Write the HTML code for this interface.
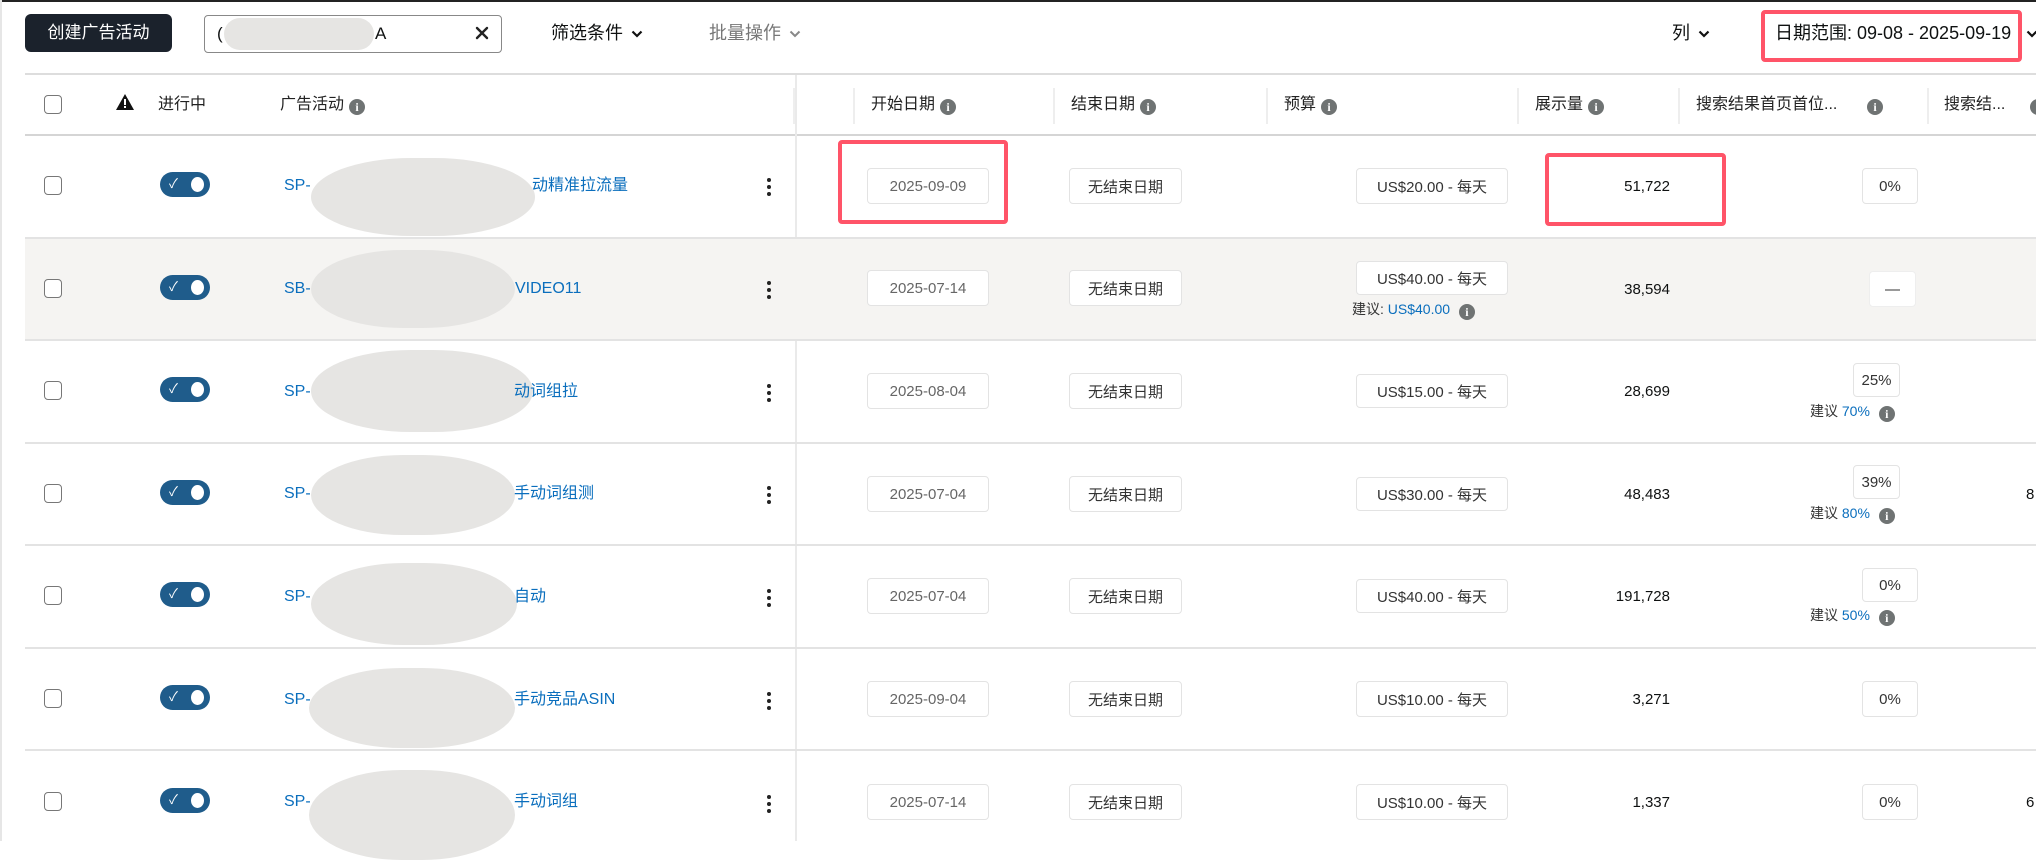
<!DOCTYPE html>
<html><head><meta charset="utf-8"><style>
*{box-sizing:border-box;margin:0;padding:0}
body{width:2036px;height:841px;overflow:hidden;background:#fff;font-family:"Liberation Sans","Noto Sans CJK SC",sans-serif;color:#0f1111;position:relative;font-size:16px}
.a{position:absolute;white-space:nowrap;line-height:22px}
.line{position:absolute;background:#d5d9d9}
.box{position:absolute;background:#fff;border:1px solid #e3e3e3;border-radius:4px;text-align:center;font-size:15px;color:#333;display:flex;align-items:center;justify-content:center}
.info{display:inline-block;width:16px;height:16px;border-radius:50%;background:#6f7373;color:#fff;font-size:12px;font-weight:bold;text-align:center;line-height:16px;font-family:"Liberation Serif",serif;vertical-align:-2px;margin-left:5px}
.cb{position:absolute;left:44px;width:18px;height:19px;border:1.5px solid #777;border-radius:4px;background:#fff}
.tog{position:absolute;left:160px;width:50px;height:25px;border-radius:13px;background:#1f5c8b}
.tog:before{content:"✓";position:absolute;left:9px;top:2px;color:#fff;font-size:13px;line-height:20px}
.tog:after{content:"";position:absolute;right:6px;top:5px;width:13px;height:15px;border-radius:50%;background:#fff}
.blob{position:absolute;background:#e6e5e3;border-radius:45%/50%}
.lnk{color:#0a6ebd;font-size:16px}
.keb{position:absolute;left:767px;width:4px}
.keb i{display:block;width:4px;height:4px;border-radius:50%;background:#222;margin-bottom:3px}
.sug{font-size:14px;color:#333}
.sug b{font-weight:normal;color:#0a6ebd}
.hd{position:absolute;top:94px;font-size:16px;color:#222;line-height:22px;white-space:nowrap}
.vd{position:absolute;top:88px;width:2px;height:36px;background:#eee}
.num{position:absolute;right:366px;font-size:15px;line-height:22px}
.chev{display:inline-block;vertical-align:middle;margin-left:8px}
</style></head><body>
<div class="a" style="left:0;top:0;width:2036px;height:2px;background:#232323"></div>
<div class="a" style="left:0;top:0;width:2px;height:841px;background:#e6e6e6"></div>
<div class="a" style="left:25px;top:14px;width:147px;height:38px;background:#1b222c;border-radius:6px;color:#fff;font-size:17px;text-align:center;line-height:38px">创建广告活动</div>
<div class="a" style="left:204px;top:15px;width:298px;height:38px;border:1px solid #888;border-radius:4px"></div>
<div class="a" style="left:217px;top:23px;font-size:17px">(</div>
<div class="blob" style="left:224px;top:18px;width:150px;height:32px;border-radius:16px"></div>
<div class="a" style="left:375px;top:23px;font-size:17px">A</div>
<svg class="a" style="left:475px;top:26px" width="14" height="14" viewBox="0 0 14 14"><path d="M2 2L12 12M12 2L2 12" stroke="#222" stroke-width="2.4" stroke-linecap="round"/></svg>
<div class="a" style="left:551px;top:22px;font-size:18px">筛选条件<svg class="chev" width="12" height="8" viewBox="0 0 12 8"><path d="M1.5 1.5L6 6L10.5 1.5" fill="none" stroke="#111" stroke-width="2.2"/></svg></div>
<div class="a" style="left:709px;top:22px;font-size:18px;color:#777">批量操作<svg class="chev" width="12" height="8" viewBox="0 0 12 8"><path d="M1.5 1.5L6 6L10.5 1.5" fill="none" stroke="#888" stroke-width="2"/></svg></div>
<div class="a" style="left:1672px;top:22px;font-size:18px">列<svg class="chev" width="12" height="8" viewBox="0 0 12 8"><path d="M1.5 1.5L6 6L10.5 1.5" fill="none" stroke="#111" stroke-width="2.2"/></svg></div>
<div class="a" style="left:1775px;top:22px;font-size:18px">日期范围: 09-08 - 2025-09-19</div>
<svg class="a" style="left:2026px;top:30px" width="12" height="8" viewBox="0 0 12 8"><path d="M1.5 1.5L6 6L10.5 1.5" fill="none" stroke="#111" stroke-width="2.2"/></svg>
<div class="a" style="left:1761px;top:10px;width:261px;height:52px;border:4px solid #ff5468;border-radius:4px"></div>

<div class="line" style="left:25px;top:73px;width:2011px;height:2px;background:#ddd"></div>
<div class="line" style="left:25px;top:134px;width:2011px;height:2px;background:#d5d5d5"></div>
<div class="a" style="left:795px;top:75px;width:2px;height:766px;background:#eaeaea"></div>
<div class="vd" style="left:793px"></div><div class="vd" style="left:853px"></div><div class="vd" style="left:1053px"></div><div class="vd" style="left:1266px"></div><div class="vd" style="left:1517px"></div><div class="vd" style="left:1678px"></div><div class="vd" style="left:1927px"></div>
<div class="cb" style="top:95px"></div>
<svg class="a" style="left:115px;top:93px" width="20" height="18" viewBox="0 0 20 18"><path d="M10 1L19 17H1Z" fill="#111"/><rect x="9" y="6" width="2" height="6" fill="#fff"/><rect x="9" y="13" width="2" height="2" fill="#fff"/></svg>
<div class="hd" style="left:158px">进行中</div>
<div class="hd" style="left:280px">广告活动<span class="info">i</span></div>
<div class="hd" style="left:871px">开始日期<span class="info">i</span></div>
<div class="hd" style="left:1071px">结束日期<span class="info">i</span></div>
<div class="hd" style="left:1284px">预算<span class="info">i</span></div>
<div class="hd" style="left:1535px">展示量<span class="info">i</span></div>
<div class="hd" style="left:1696px">搜索结果首页首位...</div><div class="hd" style="left:1862px"><span class="info">i</span></div>
<div class="hd" style="left:1944px">搜索结...</div><div class="hd" style="left:2025px"><span class="info">i</span></div>

<div class="a" style="left:25px;top:238px;width:2011px;height:102px;background:#f5f4f2"></div>
<div class="line" style="left:25px;top:237px;width:2011px;height:2px;background:#e3e3e3"></div>
<div class="line" style="left:25px;top:339px;width:2011px;height:2px;background:#e3e3e3"></div>
<div class="line" style="left:25px;top:442px;width:2011px;height:2px;background:#e3e3e3"></div>
<div class="line" style="left:25px;top:544px;width:2011px;height:2px;background:#e3e3e3"></div>
<div class="line" style="left:25px;top:647px;width:2011px;height:2px;background:#e3e3e3"></div>
<div class="line" style="left:25px;top:749px;width:2011px;height:2px;background:#e3e3e3"></div>

<!-- row1 -->
<div class="cb" style="top:176px"></div><div class="tog" style="top:172px"></div>
<div class="a lnk" style="left:284px;top:175px">SP-</div><div class="blob" style="left:311px;top:158px;width:224px;height:78px"></div><div class="a lnk" style="left:532px;top:175px">动精准拉流量</div>
<div class="keb" style="top:178px"><i></i><i></i><i></i></div>
<div class="box" style="left:867px;top:168px;width:122px;height:36px;color:#666">2025-09-09</div>
<div class="box" style="left:1069px;top:168px;width:113px;height:36px">无结束日期</div>
<div class="box" style="left:1356px;top:168px;width:152px;height:36px">US$20.00 - 每天</div>
<div class="num" style="top:176px">51,722</div>
<div class="box" style="left:1862px;top:168px;width:56px;height:36px">0%</div>
<div class="a" style="left:838px;top:140px;width:170px;height:84px;border:4px solid #ff5468;border-radius:4px"></div>
<div class="a" style="left:1545px;top:153px;width:181px;height:73px;border:4px solid #ff5468;border-radius:4px"></div>

<!-- row2 -->
<div class="cb" style="top:279px"></div><div class="tog" style="top:275px"></div>
<div class="a lnk" style="left:284px;top:278px">SB-</div><div class="blob" style="left:311px;top:250px;width:204px;height:78px"></div><div class="a lnk" style="left:515px;top:278px">VIDEO11</div>
<div class="keb" style="top:281px"><i></i><i></i><i></i></div>
<div class="box" style="left:867px;top:270px;width:122px;height:36px;color:#666">2025-07-14</div>
<div class="box" style="left:1069px;top:270px;width:113px;height:36px">无结束日期</div>
<div class="box" style="left:1356px;top:261px;width:152px;height:34px">US$40.00 - 每天</div>
<div class="a sug" style="left:1352px;top:298px">建议: <b>US$40.00</b> <span class="info">i</span></div>
<div class="num" style="top:279px">38,594</div>
<div class="box" style="left:1869px;top:271px;width:47px;height:36px;border-color:#eee">—</div>

<!-- row3 -->
<div class="cb" style="top:381px"></div><div class="tog" style="top:377px"></div>
<div class="a lnk" style="left:284px;top:381px">SP-</div><div class="blob" style="left:311px;top:350px;width:222px;height:82px"></div><div class="a lnk" style="left:514px;top:381px">动词组拉</div>
<div class="keb" style="top:384px"><i></i><i></i><i></i></div>
<div class="box" style="left:867px;top:373px;width:122px;height:36px;color:#666">2025-08-04</div>
<div class="box" style="left:1069px;top:373px;width:113px;height:36px">无结束日期</div>
<div class="box" style="left:1356px;top:374px;width:152px;height:34px">US$15.00 - 每天</div>
<div class="num" style="top:381px">28,699</div>
<div class="box" style="left:1853px;top:363px;width:47px;height:34px">25%</div>
<div class="a sug" style="left:1810px;top:400px">建议 <b>70%</b> <span class="info">i</span></div>

<!-- row4 -->
<div class="cb" style="top:484px"></div><div class="tog" style="top:480px"></div>
<div class="a lnk" style="left:284px;top:483px">SP-</div><div class="blob" style="left:311px;top:455px;width:204px;height:80px"></div><div class="a lnk" style="left:514px;top:483px">手动词组测</div>
<div class="keb" style="top:486px"><i></i><i></i><i></i></div>
<div class="box" style="left:867px;top:476px;width:122px;height:36px;color:#666">2025-07-04</div>
<div class="box" style="left:1069px;top:476px;width:113px;height:36px">无结束日期</div>
<div class="box" style="left:1356px;top:477px;width:152px;height:34px">US$30.00 - 每天</div>
<div class="num" style="top:484px">48,483</div>
<div class="box" style="left:1853px;top:465px;width:47px;height:34px">39%</div>
<div class="a sug" style="left:1810px;top:502px">建议 <b>80%</b> <span class="info">i</span></div>
<div class="a" style="left:2026px;top:484px;font-size:15px">8</div>

<!-- row5 -->
<div class="cb" style="top:586px"></div><div class="tog" style="top:582px"></div>
<div class="a lnk" style="left:284px;top:586px">SP-</div><div class="blob" style="left:311px;top:563px;width:206px;height:82px"></div><div class="a lnk" style="left:514px;top:586px">自动</div>
<div class="keb" style="top:589px"><i></i><i></i><i></i></div>
<div class="box" style="left:867px;top:578px;width:122px;height:36px;color:#666">2025-07-04</div>
<div class="box" style="left:1069px;top:578px;width:113px;height:36px">无结束日期</div>
<div class="box" style="left:1356px;top:579px;width:152px;height:34px">US$40.00 - 每天</div>
<div class="num" style="top:586px">191,728</div>
<div class="box" style="left:1862px;top:568px;width:56px;height:34px">0%</div>
<div class="a sug" style="left:1810px;top:604px">建议 <b>50%</b> <span class="info">i</span></div>

<!-- row6 -->
<div class="cb" style="top:689px"></div><div class="tog" style="top:685px"></div>
<div class="a lnk" style="left:284px;top:689px">SP-</div><div class="blob" style="left:309px;top:668px;width:206px;height:80px"></div><div class="a lnk" style="left:514px;top:689px">手动竞品ASIN</div>
<div class="keb" style="top:692px"><i></i><i></i><i></i></div>
<div class="box" style="left:867px;top:681px;width:122px;height:36px;color:#666">2025-09-04</div>
<div class="box" style="left:1069px;top:681px;width:113px;height:36px">无结束日期</div>
<div class="box" style="left:1356px;top:681px;width:152px;height:36px">US$10.00 - 每天</div>
<div class="num" style="top:689px">3,271</div>
<div class="box" style="left:1862px;top:681px;width:56px;height:36px">0%</div>

<!-- row7 -->
<div class="cb" style="top:792px"></div><div class="tog" style="top:788px"></div>
<div class="a lnk" style="left:284px;top:791px">SP-</div><div class="blob" style="left:309px;top:770px;width:206px;height:90px"></div><div class="a lnk" style="left:514px;top:791px">手动词组</div>
<div class="keb" style="top:795px"><i></i><i></i><i></i></div>
<div class="box" style="left:867px;top:784px;width:122px;height:36px;color:#666">2025-07-14</div>
<div class="box" style="left:1069px;top:784px;width:113px;height:36px">无结束日期</div>
<div class="box" style="left:1356px;top:784px;width:152px;height:36px">US$10.00 - 每天</div>
<div class="num" style="top:792px">1,337</div>
<div class="box" style="left:1862px;top:784px;width:56px;height:36px">0%</div>
<div class="a" style="left:2026px;top:792px;font-size:15px">6</div>
</body></html>
